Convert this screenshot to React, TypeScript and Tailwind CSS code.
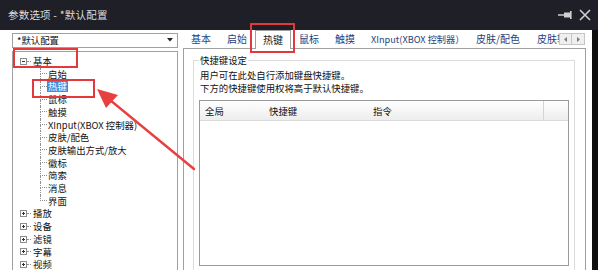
import React from "react";

const treeChildren = [
  "启始",
  "热键",
  "鼠标",
  "触摸",
  "XInput(XBOX 控制器)",
  "皮肤/配色",
  "皮肤输出方式/放大",
  "徽标",
  "简索",
  "消息",
  "界面",
];

const collapsed = ["播放", "设备", "滤镜", "字幕", "视频"];

function Box({ plus }: { plus?: boolean }) {
  return (
    <svg width="7" height="7" viewBox="0 0 7 7" className="shrink-0">
      <rect x="0.5" y="0.5" width="6" height="6" fill="#fff" stroke="#8c8c8c" />
      <line x1="2" y1="3.5" x2="5" y2="3.5" stroke="#333" />
      {plus && <line x1="3.5" y1="2" x2="3.5" y2="5" stroke="#333" />}
    </svg>
  );
}

function TopRow({ label, plus }: { label: string; plus?: boolean }) {
  return (
    <div className="flex items-center h-[12.7px] pl-[7px]">
      <Box plus={plus} />
      <div className="w-[4px] border-t border-dotted border-[#909090]" />
      <span className="ml-[2px] text-[#111]">{label}</span>
    </div>
  );
}

function ChildRow({ label, last, selected }: { label: string; last?: boolean; selected?: boolean }) {
  return (
    <div className="flex h-[12.7px] ml-[27px]">
      <div className="w-[7px] flex flex-col shrink-0">
        <div className="h-1/2 border-l border-b border-dotted border-[#909090]" />
        <div className={"h-1/2 " + (last ? "" : "border-l border-dotted border-[#909090]")} />
      </div>
      <div className="flex items-center">
        {selected ? (
          <span className="bg-[#3a8ee0] text-white px-[1px] leading-[11px]">{label}</span>
        ) : (
          <span className="text-[#111] pl-[1px] whitespace-nowrap">{label}</span>
        )}
      </div>
    </div>
  );
}

const tabs: { label: string; w: string; size?: string; active?: boolean }[] = [
  { label: "基本", w: "w-[36px]" },
  { label: "启始", w: "w-[36px]" },
  { label: "热键", w: "w-[36px]", active: true },
  { label: "鼠标", w: "w-[36px]" },
  { label: "触摸", w: "w-[36px]" },
  { label: "XInput(XBOX 控制器）", w: "w-[105px]", size: "text-[9.2px]" },
  { label: "皮肤/配色", w: "w-[61px]" },
  { label: "皮肤输出方式/放大", w: "w-[30px]" },
];

export default function App() {
  return (
    <div className="relative w-[598px] h-[270px] overflow-hidden bg-white flex flex-col font-['Noto_Sans_CJK_SC','Liberation_Sans',sans-serif] text-[9.4px] leading-[12.7px]">
      {/* Title bar */}
      <div className="h-[30px] shrink-0 bg-[#1f1f27] flex items-center pl-[8px] pr-[7px]">
        <span className="text-[10.5px] text-[#dcdcdc] tracking-[0.2px]">参数选项 - *默认配置</span>
        <div className="ml-auto flex items-center gap-[6px]">
          <svg width="15" height="10" viewBox="0 0 15 10">
            <line x1="0" y1="5" x2="6" y2="5" stroke="#cfcfcf" strokeWidth="1.5" />
            <rect x="6" y="2.5" width="6" height="5" fill="#cfcfcf" />
            <rect x="12" y="1" width="1.6" height="8" fill="#cfcfcf" />
          </svg>
          <svg width="12" height="12" viewBox="0 0 12 12">
            <path d="M1 1 L11 11 M11 1 L1 11" stroke="#cfcfcf" strokeWidth="1.6" />
          </svg>
        </div>
      </div>

      {/* Body */}
      <div className="flex flex-1 min-h-0">
        <div className="flex flex-1 min-w-0 pl-[12px] bg-white">
          {/* Left column */}
          <div className="w-[166px] shrink-0 flex flex-col pt-[3px]">
            <div className="h-[15px] border border-[#a0a0a0] bg-white flex items-center pl-[4px] pr-[4px]">
              <span className="text-[#111]">*默认配置</span>
              <svg width="6" height="4" viewBox="0 0 6 4" className="ml-auto">
                <path d="M0 0 L6 0 L3 3.5 Z" fill="#222" />
              </svg>
            </div>
            <div className="mt-[3px] h-[240px] shrink-0 border border-[#a0a0a0] bg-white pt-[3.5px]">
              <TopRow label="基本" />
              {treeChildren.map((c, i) => (
                <ChildRow key={c} label={c} selected={i === 1} last={i === treeChildren.length - 1} />
              ))}
              {collapsed.map((c) => (
                <TopRow key={c} label={c} plus />
              ))}
            </div>
          </div>

          {/* Right column */}
          <div className="ml-[5px] w-[403px] shrink-0 flex flex-col">
            <div className="h-[18px] shrink-0 flex items-start">
              {tabs.map((t) =>
                t.active ? (
                  <div
                    key={t.label}
                    className={t.w + " h-[19px] shrink-0 relative z-10 bg-white border border-b-0 border-[#a0a0a0] flex items-center justify-center text-[10px] text-[#222]"}
                  >
                    {t.label}
                  </div>
                ) : (
                  <div
                    key={t.label}
                    className={t.w + " h-[18px] shrink-0 overflow-hidden whitespace-nowrap flex items-center pl-[8px] text-[#1f3f7c] " + (t.size ?? "text-[10px]")}
                  >
                    {t.label}
                  </div>
                )
              )}
              <div className="flex mt-[3px]">
                <div className="w-[13px] h-[12px] border border-[#c6c6c6] bg-[#efefef] flex items-center justify-center">
                  <svg width="3" height="5" viewBox="0 0 3 5"><path d="M3 0 L0 2.5 L3 5 Z" fill="#7a7a7a" /></svg>
                </div>
                <div className="w-[13px] h-[12px] border border-l-0 border-[#c6c6c6] bg-[#efefef] flex items-center justify-center">
                  <svg width="3" height="5" viewBox="0 0 3 5"><path d="M0 0 L3 2.5 L0 5 Z" fill="#7a7a7a" /></svg>
                </div>
              </div>
            </div>
            <div className="h-[240px] shrink-0 border border-[#a0a0a0] bg-white pl-[9px] pr-[10px] pt-[5px]">
              <fieldset className="border border-[#dcdcdc] pl-[5px] pr-[5px] pb-[4px]">
                <legend className="px-[1px] leading-[12px] text-[#111]">快捷键设定</legend>
                <div className="pt-[3px] pl-[1px] text-[#111]">
                  <div>用户可在此处自行添加键盘快捷键。</div>
                  <div>下方的快捷键使用权将高于默认快捷键。</div>
                </div>
                <div className="mt-[6px] h-[166px] border border-[#9a9a9a] bg-white">
                  <div className="h-[20px] flex bg-gradient-to-b from-white to-[#ededed] border-b border-[#dadada] text-[#111]">
                    <div className="w-[64px] pl-[5px] flex items-center">全局</div>
                    <div className="w-[104px] pl-[5px] flex items-center">快捷键</div>
                    <div className="w-[176px] pl-[5px] flex items-center border-r border-[#d4d4d4]">指令</div>
                  </div>
                </div>
              </fieldset>
            </div>
          </div>
        </div>
        <div className="w-[6px] shrink-0 bg-[#0f0f12]" />
      </div>

      {/* Annotation overlays */}
      <div className="absolute left-[13px] top-[48px] w-[65px] h-[20px] border-2 border-[#e23a3c] pointer-events-none" />
      <div className="absolute left-[32px] top-[79px] w-[63px] h-[19px] border-2 border-[#e23a3c] pointer-events-none" />
      <div className="absolute left-[250px] top-[23px] w-[45px] h-[30px] border-2 border-[#e23a3c] pointer-events-none" />
      <svg className="absolute left-0 top-0 pointer-events-none" width="598" height="270" viewBox="0 0 598 270">
        <line x1="194" y1="169" x2="110" y2="100" stroke="#e8403f" strokeWidth="2.4" strokeLinecap="round" />
        <polygon points="97,89 118,95 106,108" fill="#e8403f" />
      </svg>
    </div>
  );
}
